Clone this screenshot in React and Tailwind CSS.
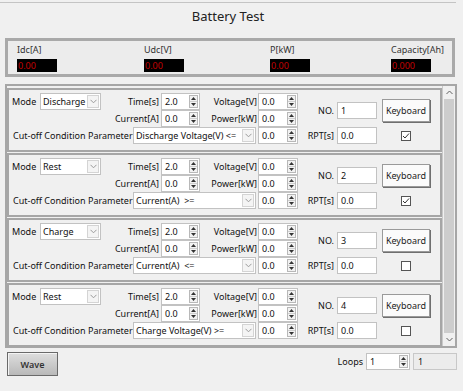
import React from "react";

const blocks = [
  { mode: "Discharge", no: "1", param: "Discharge Voltage(V) <=", checked: true },
  { mode: "Rest", no: "2", param: "Current(A)  >=", checked: true },
  { mode: "Charge", no: "3", param: "Current(A)  <=", checked: false },
  { mode: "Rest", no: "4", param: "Charge Voltage(V) >=", checked: false },
];

function Spin() {
  return (
    <div className="flex flex-col w-[9px] h-[13px] border border-[#b8b8b8] bg-[#f2f2f2] mr-[1px] shrink-0">
      <div className="flex-1 flex items-center justify-center border-b border-[#cfcfcf]">
        <svg width="5" height="3" viewBox="0 0 5 3"><path d="M0 3L2.5 0L5 3Z" fill="#333" /></svg>
      </div>
      <div className="flex-1 flex items-center justify-center">
        <svg width="5" height="3" viewBox="0 0 5 3"><path d="M0 0L2.5 3L5 0Z" fill="#333" /></svg>
      </div>
    </div>
  );
}

function NumInput({ value = "0.0", w = "w-[40px]" }) {
  return (
    <div className={`flex items-center ${w} h-[17px] bg-white border border-[#c2c2c2] shrink-0`}>
      <span className="flex-1 pl-[3px] leading-[15px]">{value}</span>
      <Spin />
    </div>
  );
}

function Chevron() {
  return (
    <svg width="7" height="5" viewBox="0 0 7 5"><path d="M0.5 0.8L3.5 3.8L6.5 0.8" fill="none" stroke="#9a9a9a" strokeWidth="1" /></svg>
  );
}

function Select({ value, w }) {
  return (
    <div className={`flex items-center ${w} h-[17px] bg-white border border-[#c2c2c2] shrink-0`}>
      <span className="flex-1 pl-[2px] leading-[15px] whitespace-pre overflow-hidden">{value}</span>
      <div className="w-[12px] h-[13px] mr-[1px] border border-[#d4d4d4] bg-[#f4f4f4] flex items-center justify-center shrink-0">
        <Chevron />
      </div>
    </div>
  );
}

function TextBox({ value }) {
  return (
    <div className="flex items-center w-[40px] h-[17px] bg-white border border-[#c2c2c2] shrink-0">
      <span className="pl-[3px] leading-[15px]">{value}</span>
    </div>
  );
}

function Block({ b }) {
  return (
    <div className="h-[64px] mb-[1px] border-2 border-[#a6a6a6] bg-[#f0f0f0] pt-[3px] shrink-0">
      <div className="flex">
        <div className="flex flex-col">
          <div className="flex items-center h-[17px]">
            <span className="w-[31px] pl-[3px] leading-[15px]">Mode</span>
            <Select value={b.mode} w="w-[61px]" />
            <span className="w-[60px] text-right pr-[2px] leading-[15px]">Time[s]</span>
            <NumInput value="2.0" w="w-[39px]" />
            <span className="w-[58px] text-right pr-[1px] leading-[15px]">Voltage[V]</span>
            <NumInput />
          </div>
          <div className="flex items-center h-[17px]">
            <span className="w-[92px]" />
            <span className="w-[60px] text-right pr-[2px] leading-[15px]">Current[A]</span>
            <NumInput value="0.0" w="w-[39px]" />
            <span className="w-[58px] text-right pr-[1px] leading-[15px]">Power[kW]</span>
            <NumInput />
          </div>
        </div>
        <div className="flex items-center">
          <span className="w-[39px] text-right pr-[3px] leading-[15px]">NO.</span>
          <TextBox value={b.no} />
          <button className="ml-[5px] w-[48px] h-[23px] px-0 whitespace-nowrap bg-[#fbfbfb] border border-[#9a9a9a] shadow-[1px_1px_0_#6f6f6f] leading-[15px] text-[#222]">
            Keyboard
          </button>
        </div>
      </div>
      <div className="flex items-center h-[17px]">
        <span className="w-[79px] pl-[4px] leading-[15px] whitespace-nowrap">Cut-off Condition</span>
        <span className="w-[45px] leading-[15px]">Parameter</span>
        <Select value={b.param} w="w-[123px]" />
        <span className="w-[2px]" />
        <NumInput />
        <span className="w-[39px] text-right pr-[3px] leading-[15px]">RPT[s]</span>
        <TextBox value="0.0" />
        <div className="w-[53px] flex justify-center pl-[5px]">
          <div className="w-[10px] h-[10px] bg-white border border-[#555] flex items-center justify-center">
            {b.checked && (
              <svg width="8" height="8" viewBox="0 0 8 8"><path d="M1 4L3 6L7 1.5" fill="none" stroke="#333" strokeWidth="1" /></svg>
            )}
          </div>
        </div>
      </div>
    </div>
  );
}

function Readout({ label, value, w }) {
  return (
    <div className={`flex flex-col ${w}`}>
      <span className="leading-[12px] text-[#333] whitespace-nowrap">{label}</span>
      <div className="mt-[3px] w-[40px] h-[13px] bg-black text-[#c40000] leading-[13px] pl-[1px]">{value}</div>
    </div>
  );
}

export default function App() {
  return (
    <div className="w-[463px] h-[391px] bg-[#f0f0f0] overflow-hidden font-['Noto_Sans',sans-serif] text-[9px] text-[#111]">
      <div className="h-[2px]" />
      <div className="h-[36px] w-[456px] border-t border-[#c4c4c4] flex justify-center">
        <span className="text-[13px] leading-[20px] pt-[3px] text-[#222]">Battery Test</span>
      </div>
      <div className="ml-[5px] w-[450px] h-[39px] border-[3px] border-[#a9a9a9] bg-[#ececec] flex pl-[9px] pt-[3px]">
        <Readout label="Idc[A]" value="0.00" w="w-[127px]" />
        <Readout label="Udc[V]" value="0.00" w="w-[126px]" />
        <Readout label="P[kW]" value="0.00" w="w-[121px]" />
        <Readout label="Capacity[Ah]" value="0.000" w="w-[60px]" />
      </div>
      <div className="ml-[5px] mt-[7px] w-[452px] h-[264px] border-2 border-[#a6a6a6] flex overflow-hidden">
        <div className="w-[435px] flex flex-col pt-[2px] overflow-hidden">
          {blocks.map((b, i) => (
            <Block key={i} b={b} />
          ))}
        </div>
        <div className="w-[13px] flex flex-col bg-[#f0f0f0] border-l border-[#c9c9c9]">
          <div className="h-[13px] flex items-center justify-center">
            <svg width="7" height="5" viewBox="0 0 7 5"><path d="M0.5 4L3.5 1L6.5 4" fill="none" stroke="#606060" strokeWidth="1" /></svg>
          </div>
          <div className="flex-1 mx-[1px] bg-[#cdcdcd]" />
          <div className="h-[13px] flex items-center justify-center">
            <svg width="7" height="5" viewBox="0 0 7 5"><path d="M0.5 1L3.5 4L6.5 1" fill="none" stroke="#606060" strokeWidth="1" /></svg>
          </div>
        </div>
      </div>
      <div className="flex items-start mt-[4px] ml-[7px]">
        <button className="w-[51px] h-[24px] px-0 border border-[#6a6a6a] bg-gradient-to-b from-[#dedede] to-[#b9b9b9] shadow-[inset_1px_1px_0_#f4f4f4] font-semibold text-[#333] leading-[15px]">
          Wave
        </button>
        <div className="flex items-center ml-auto mr-[6px] mt-[1px]">
          <span className="leading-[15px] mr-[3px]">Loops</span>
          <NumInput value="1" w="w-[44px]" />
          <div className="ml-[3px] w-[44px] h-[17px] bg-[#ececec] border border-[#c8c8c8] pl-[4px] leading-[15px]">1</div>
        </div>
      </div>
    </div>
  );
}
